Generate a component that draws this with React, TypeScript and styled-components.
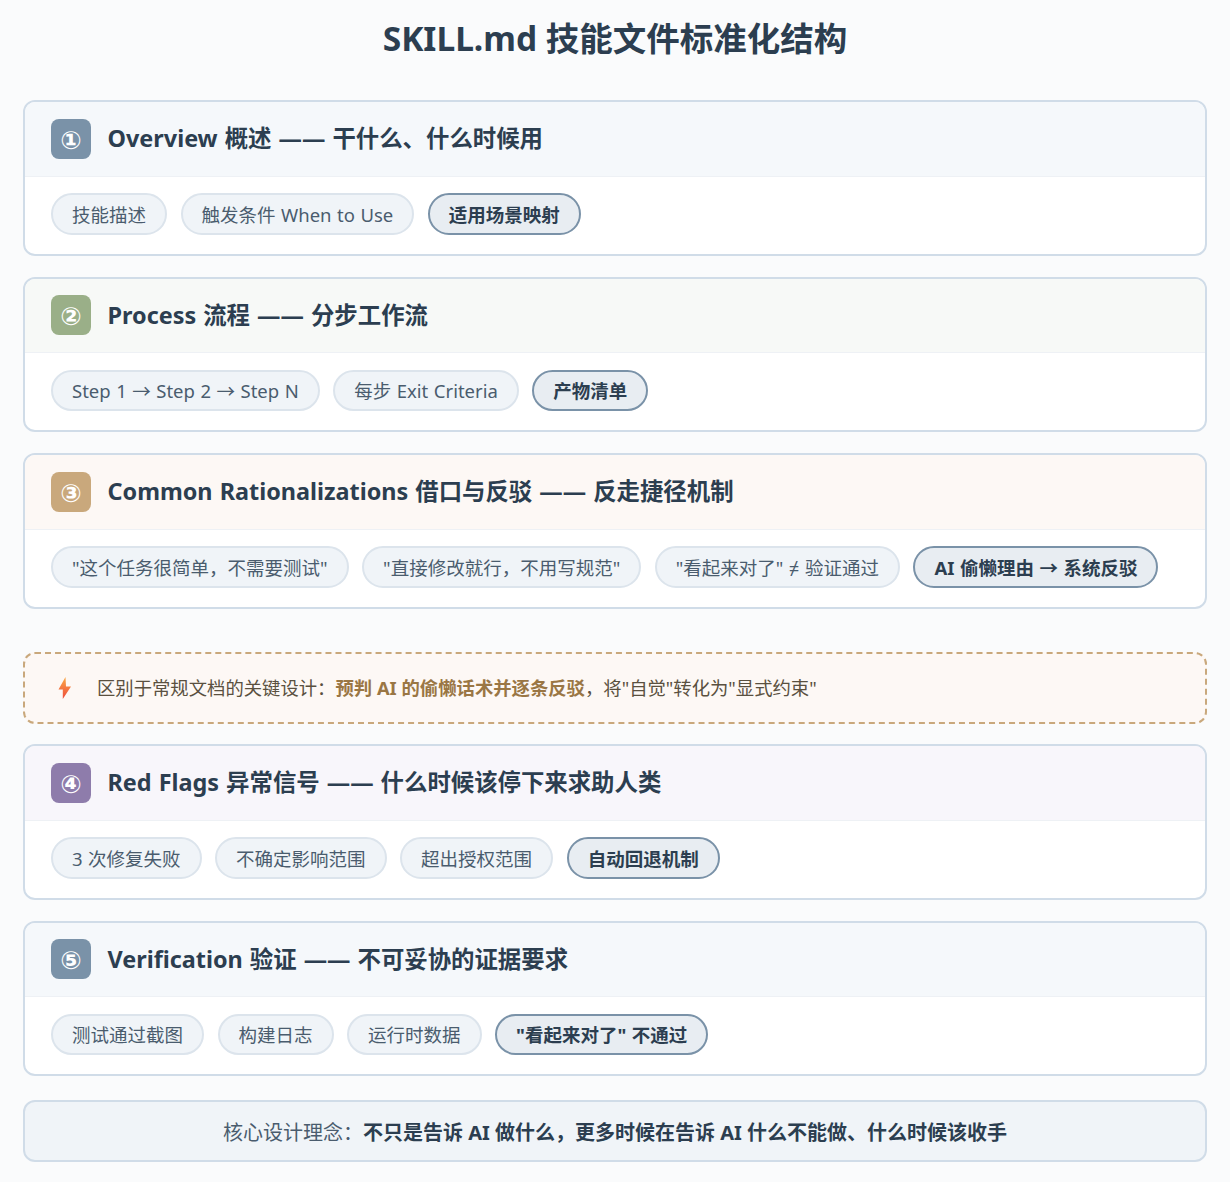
import React from 'react';
import styled, { createGlobalStyle } from 'styled-components';

const GlobalStyle = createGlobalStyle`
  html, body {
    margin: 0;
    padding: 0;
  }
  body {
    background: #fafbfc;
    font-family: "Noto Sans", "Noto Sans CJK SC", sans-serif;
  }
`

type Pill = { text: string, strong?: boolean }
type Section = { num: string, title: string, color: string, headBg: string, pills: Pill[] }

const sections: Section[] = [
  {
    num: '①', title: 'Overview 概述 —— 干什么、什么时候用', color: '#7a92a8', headBg: '#f5f8fb',
    pills: [{ text: '技能描述' }, { text: '触发条件 When to Use' }, { text: '适用场景映射', strong: true }],
  },
  {
    num: '②', title: 'Process 流程 —— 分步工作流', color: '#9aaf88', headBg: '#f7f9f7',
    pills: [{ text: 'Step 1 → Step 2 → Step N' }, { text: '每步 Exit Criteria' }, { text: '产物清单', strong: true }],
  },
  {
    num: '③', title: 'Common Rationalizations 借口与反驳 —— 反走捷径机制', color: '#c9a87c', headBg: '#fdf8f5',
    pills: [
      { text: '"这个任务很简单，不需要测试"' },
      { text: '"直接修改就行，不用写规范"' },
      { text: '"看起来对了" ≠ 验证通过' },
      { text: 'AI 偷懒理由 → 系统反驳', strong: true },
    ],
  },
  {
    num: '④', title: 'Red Flags 异常信号 —— 什么时候该停下来求助人类', color: '#8e7cab', headBg: '#f8f6fb',
    pills: [{ text: '3 次修复失败' }, { text: '不确定影响范围' }, { text: '超出授权范围' }, { text: '自动回退机制', strong: true }],
  },
  {
    num: '⑤', title: 'Verification 验证 —— 不可妥协的证据要求', color: '#7a92a8', headBg: '#f5f8fb',
    pills: [{ text: '测试通过截图' }, { text: '构建日志' }, { text: '运行时数据' }, { text: '"看起来对了" 不通过', strong: true }],
  },
]

const SectionCard: React.FC<{ section: Section }> = ({ section }) => (
  <Card>
    <CardHead $bg={section.headBg}>
      <NumBadge $color={section.color}>{section.num}</NumBadge>
      <CardTitle>{section.title}</CardTitle>
    </CardHead>
    <CardBody>
      {section.pills.map((pill) => (
        <Tag key={pill.text} $strong={pill.strong}>{pill.text}</Tag>
      ))}
    </CardBody>
  </Card>
)

const Bolt = () => (
  <svg width="14" height="22" viewBox="0 0 14 22">
    <defs>
      <linearGradient id="bolt" x1="0" y1="0" x2="0" y2="1">
        <stop offset="0" stopColor="#fbaa45" />
        <stop offset="1" stopColor="#ee4a3c" />
      </linearGradient>
    </defs>
    <path d="M7.5 0 L0.5 12.5 L4.8 12.5 L4.8 22 L13 9.5 L8 9.5 Z" fill="url(#bolt)" />
  </svg>
)

export default function App() {
  return (
    <Page>
      <GlobalStyle />
      <Title>SKILL.md 技能文件标准化结构</Title>
      <Stack>
        <SectionCard section={sections[0]} />
        <SectionCard section={sections[1]} />
        <SectionCard section={sections[2]} />
      </Stack>
      <Callout>
        <Bolt />
        <CalloutText>
          区别于常规文档的关键设计：<b>预判 AI 的偷懒话术并逐条反驳</b>，将"自觉"转化为"显式约束"
        </CalloutText>
      </Callout>
      <Stack>
        <SectionCard section={sections[3]} />
        <SectionCard section={sections[4]} />
      </Stack>
      <Footer>
        核心设计理念：<b>不只是告诉 AI 做什么，更多时候在告诉 AI 什么不能做、什么时候该收手</b>
      </Footer>
    </Page>
  )
}

const Page = styled.div`
  box-sizing: border-box;
  width: 1230px;
  height: 1182px;
  padding: 16px 23px 0 23px;
  overflow: hidden;
  background: #fafbfc;
`

const Title = styled.h1`
  margin: 0 0 39px 0;
  height: 45px;
  line-height: 45px;
  text-align: center;
  font-size: 33.5px;
  font-weight: 700;
  color: #2c3e50;
`

const Stack = styled.div`
  display: flex;
  flex-direction: column;
  gap: 21px;
`

const Card = styled.div`
  box-sizing: border-box;
  height: 155.5px;
  background: #ffffff;
  border: 2px solid #d0dce8;
  border-radius: 12px;
  overflow: hidden;
`

const CardHead = styled.div<{ $bg: string }>`
  box-sizing: border-box;
  height: 74.5px;
  display: flex;
  align-items: center;
  gap: 16.5px;
  padding: 0 26px;
  background: ${(p) => p.$bg};
  border-bottom: 1px solid #eef1f5;
`

const NumBadge = styled.div<{ $color: string }>`
  box-sizing: border-box;
  width: 40px;
  height: 40px;
  flex-shrink: 0;
  display: flex;
  align-items: center;
  justify-content: center;
  padding-top: 3px;
  border-radius: 8px;
  background: ${(p) => p.$color};
  color: #ffffff;
  font-family: "DejaVu Sans", sans-serif;
  font-size: 25px;
  font-weight: 700;
`

const CardTitle = styled.div`
  margin-top: -3px;
  font-size: 23.4px;
  font-weight: 700;
  word-spacing: 1px;
  color: #2c3e50;
`

const CardBody = styled.div`
  display: flex;
  gap: 13.5px;
  padding: 16.5px 26px;
`

const Tag = styled.div<{ $strong?: boolean }>`
  box-sizing: border-box;
  height: 41.5px;
  display: flex;
  align-items: center;
  padding: 0 19px;
  border-radius: 21px;
  white-space: nowrap;
  font-size: 18.5px;
  word-spacing: 0.7px;
  font-weight: ${(p) => (p.$strong ? 700 : 400)};
  color: ${(p) => (p.$strong ? '#2c3e50' : '#4a5c6e')};
  background: ${(p) => (p.$strong ? '#e8edf2' : '#f0f4f8')};
  border: ${(p) => (p.$strong ? '2px solid #7a92a8' : '2px solid #dce4ec')};
`

const Callout = styled.div`
  box-sizing: border-box;
  height: 71.5px;
  margin: 43.5px 0 20.5px 0;
  display: flex;
  align-items: center;
  gap: 25px;
  padding: 0 33px;
  background: #fdf8f5;
  border: 2px dashed #c9a87c;
  border-radius: 12px;
`

const CalloutText = styled.div`
  margin-top: -2px;
  font-size: 18.35px;
  color: #5a5040;

  b {
    color: #9a7644;
    font-weight: 700;
  }
`

const Footer = styled.div`
  box-sizing: border-box;
  height: 62px;
  margin-top: 24px;
  display: flex;
  align-items: center;
  justify-content: center;
  background: #f0f4f8;
  border: 2px solid #d0dce8;
  border-radius: 12px;
  font-size: 20px;
  color: #4a5c6e;

  b {
    color: #2c3e50;
    font-weight: 700;
  }
`
